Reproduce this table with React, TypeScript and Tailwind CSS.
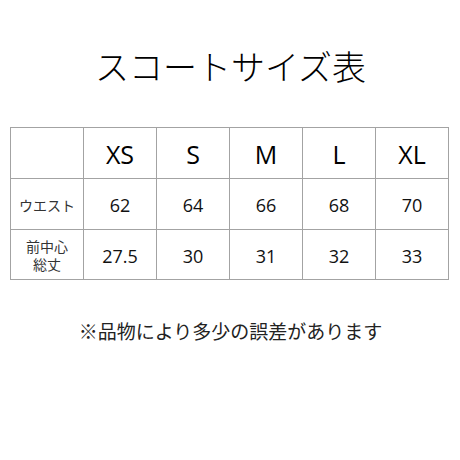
import React from "react";

const sizes = ["XS", "S", "M", "L", "XL"];
const waist = ["62", "64", "66", "68", "70"];
const length = ["27.5", "30", "31", "32", "33"];

const cjk = "font-['Noto_Sans_CJK_JP',sans-serif]";
const latin = "font-['Open_Sans','Noto_Sans_CJK_JP',sans-serif]";

export default function App() {
  return (
    <div className="w-[460px] h-[460px] bg-white text-[#111] flex flex-col">
      <h1
        className={`${cjk} font-light text-[34px] leading-[34px] text-center mt-[49px] ml-[1px] text-black`}
      >
        スコートサイズ表
      </h1>
      <table className="ml-[10px] mt-[44px] w-[439px] table-fixed border-collapse">
        <tbody>
          <tr className="h-[51px]">
            <td className="border border-[#a3a3a3]"></td>
            {sizes.map((s) => (
              <td
                key={s}
                className={`border border-[#a3a3a3] text-center ${latin} text-[25px] leading-none text-black pt-[2px]`}
              >
                {s}
              </td>
            ))}
          </tr>
          <tr className="h-[51px]">
            <td className={`border border-[#a3a3a3] text-center ${cjk} text-[14px] leading-[18px] text-[#333] pt-[2px]`}>
              ウエスト
            </td>
            {waist.map((v) => (
              <td
                key={v}
                className={`border border-[#a3a3a3] text-center ${latin} text-[18px] leading-none text-[#111] pt-[2px]`}
              >
                {v}
              </td>
            ))}
          </tr>
          <tr className="h-[50px]">
            <td className={`border border-[#a3a3a3] text-center ${cjk} text-[14px] leading-[18px] text-[#333]`}>
              <div>前中心</div>
              <div>総丈</div>
            </td>
            {length.map((v) => (
              <td
                key={v}
                className={`border border-[#a3a3a3] text-center ${latin} text-[18px] leading-none text-[#111] pt-[2px]`}
              >
                {v}
              </td>
            ))}
          </tr>
        </tbody>
      </table>
      <p className={`${cjk} text-[19px] leading-[19px] text-center mt-[41px] ml-[1px] text-[#222]`}>
        ※品物により多少の誤差があります
      </p>
    </div>
  );
}
